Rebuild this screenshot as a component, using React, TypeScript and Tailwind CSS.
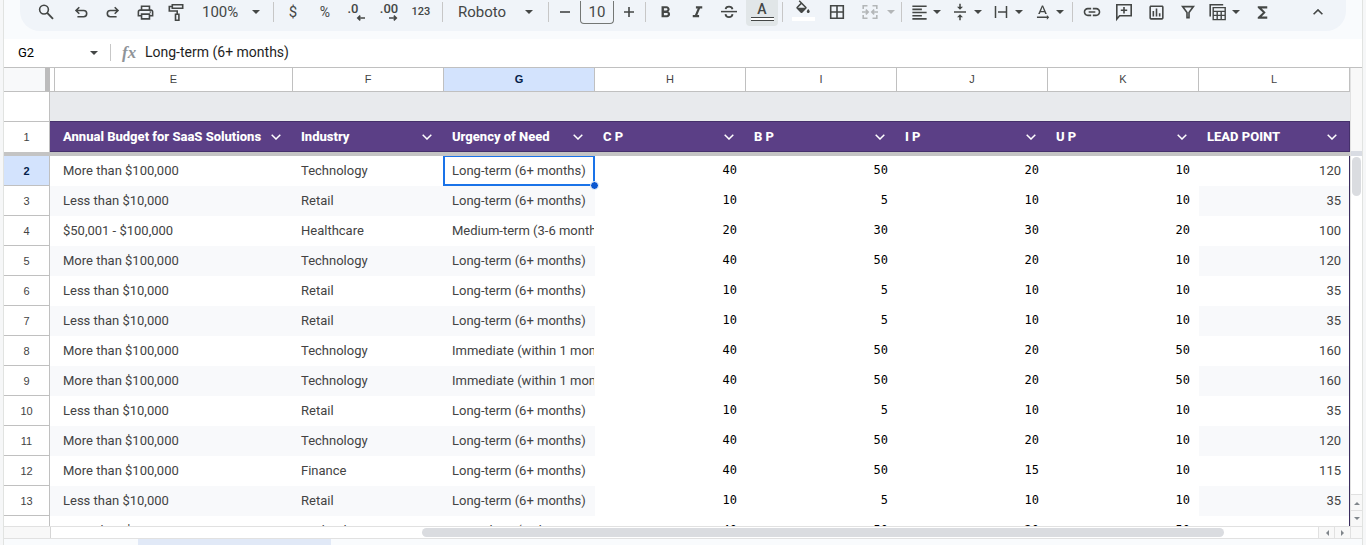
import React from 'react';
import {
  MdOutlinePrint,
  MdFormatBold,
  MdFormatItalic,
  MdFormatAlignLeft,
  MdVerticalAlignCenter,
  MdTextRotationNone,
  MdLink,
  MdOutlineInsertChart,
  MdFunctions,
} from 'react-icons/md';

type Kids = { children?: React.ReactNode };

const Glyph = ({ children }: Kids) => (
  <svg width="20" height="20" viewBox="0 0 20 20" fill="none" stroke="currentColor" strokeWidth="1.6" className="shrink-0" aria-hidden="true">
    {children}
  </svg>
);

const Caret = () => (
  <svg width="8" height="4" viewBox="0 0 8 4" fill="currentColor" className="shrink-0" aria-hidden="true">
    <path d="M0 0h8L4 4z" />
  </svg>
);

const Tool = ({ label, className = '', children }: Kids & { label: string; className?: string }) => (
  <button type="button" aria-label={label} className={`flex h-6 w-8 shrink-0 items-center justify-center ${className}`}>
    {children}
  </button>
);

const MenuTool = ({ label, className = '', children }: Kids & { label: string; className?: string }) => (
  <button type="button" aria-label={label} className={`flex h-6 shrink-0 items-center ${className}`}>
    <span className="flex w-5 justify-center">{children}</span>
    <Caret />
  </button>
);

const Sep = ({ className = '' }: { className?: string }) => <span className={`h-5 w-px shrink-0 bg-[#c7c7c7] ${className}`} />;

const Toolbar = () => (
  <div className="h-[39px] shrink-0 bg-[#f9fbfd] px-4">
    <div role="toolbar" aria-label="Formatting" className="flex h-[31px] items-center overflow-hidden rounded-b-[20px] bg-[#f0f4f9] pr-3 pb-[7px] pl-[10px] text-[#444746]">
      <Tool label="Search the menus">
        <Glyph>
          <circle cx="8" cy="7.6" r="4.4" />
          <path d="M11.2 10.9L17 16.8" strokeWidth="1.9" />
        </Glyph>
      </Tool>
      <Tool label="Undo" className="ml-[3px]">
        <Glyph>
          <path d="M8.3 5.2L5 8.5l3.3 3.3M5 8.5h7.6a3.1 3.1 0 0 1 0 6.2H6.4" />
        </Glyph>
      </Tool>
      <Tool label="Redo">
        <Glyph>
          <path d="M11.7 5.2L15 8.5l-3.3 3.3M15 8.5H7.4a3.1 3.1 0 0 0 0 6.2h6.2" />
        </Glyph>
      </Tool>
      <Tool label="Print">
        <MdOutlinePrint size={19} />
      </Tool>
      <Tool label="Paint format">
        <Glyph>
          <path d="M5.3 2.8h10.4v3.4H5.3zM5.3 4.5H2.3V9h7.9v3M8.5 12.2h3.4v6H8.5z" />
        </Glyph>
      </Tool>
      <button type="button" aria-label="Zoom" className="flex h-6 w-[72px] shrink-0 items-center justify-between pr-[5px] pl-[9px] text-[15px]">
        100%
        <Caret />
      </button>
      <Sep className="ml-2" />
      <Tool label="Format as currency" className="ml-[3px] text-[15px]">$</Tool>
      <Tool label="Format as percent" className="text-[14px]">%</Tool>
      <Tool label="Decrease decimal places" className="flex-col">
        <span className="mr-2 text-[13px] leading-3 font-medium">.0</span>
        <svg width="20" height="6" viewBox="0 0 20 6" fill="none" stroke="currentColor" strokeWidth="1.6" aria-hidden="true">
          <path d="M18 3h-7M13.3 .6L10.8 3l2.5 2.4" />
        </svg>
      </Tool>
      <Tool label="Increase decimal places" className="flex-col">
        <span className="text-[13px] leading-3 font-medium">.00</span>
        <svg width="20" height="6" viewBox="0 0 20 6" fill="none" stroke="currentColor" strokeWidth="1.6" aria-hidden="true">
          <path d="M10 3h7M14.8 .6L17.3 3l-2.5 2.4" />
        </svg>
      </Tool>
      <Tool label="More formats" className="text-[11px] font-medium">123</Tool>
      <Sep className="ml-[5px]" />
      <button type="button" aria-label="Font" className="ml-[7px] flex h-6 w-[90px] shrink-0 items-center justify-between pr-[7px] pl-2 text-[15px]">
        Roboto
        <Caret />
      </button>
      <Sep className="ml-2" />
      <Tool label="Decrease font size" className="ml-1 !w-6">
        <Glyph><path d="M5 10h10" /></Glyph>
      </Tool>
      <input aria-label="Font size" defaultValue="10" className="ml-[3px] h-[23px] w-[34px] shrink-0 rounded-b-[4px] border border-t-0 border-[#747775] bg-transparent text-center text-[15px]" />
      <Tool label="Increase font size" className="ml-[3px] !w-6">
        <Glyph><path d="M5 10h10M10 5v10" /></Glyph>
      </Tool>
      <Sep className="ml-1" />
      <Tool label="Bold" className="ml-[3px]"><MdFormatBold size={19} /></Tool>
      <Tool label="Italic"><MdFormatItalic size={19} /></Tool>
      <Tool label="Strikethrough">
        <Glyph>
          <path d="M2 9.6h16" strokeWidth="1.5" />
          <path d="M13.5 7.2C13.1 5.5 11.8 4.6 10 4.6S6.8 5.5 6.6 7.2M6.5 12.2c.2 1.9 1.6 3 3.5 3s3.3-1.1 3.5-3" strokeWidth="1.8" />
        </Glyph>
      </Tool>
      <button type="button" aria-label="Text color" className="ml-px flex h-[26px] w-8 shrink-0 flex-col items-center self-start rounded-b-[4px] bg-[#e1e6e8] pt-[2px]">
        <span className="text-[14px] leading-[15px] font-medium">A</span>
        <span className="h-1 w-[23px] border-y border-[#444746] bg-white" />
      </button>
      <Sep className="ml-1" />
      <button type="button" aria-label="Fill color" className="ml-1 flex h-[26px] w-8 shrink-0 flex-col items-center self-start">
        <svg width="18" height="17" viewBox="0 0 24 22" fill="currentColor" aria-hidden="true">
          <path d="M16.56 8.94L7.62 0 6.21 1.41l2.38 2.38-5.15 5.15c-.59.59-.59 1.54 0 2.12l5.5 5.5c.29.29.68.44 1.06.44s.77-.15 1.06-.44l5.5-5.5c.59-.58.59-1.53 0-2.12zM5.21 10L10 5.21 14.79 10zM19 11.5s-2 2.17-2 3.5c0 1.1.9 2 2 2s2-.9 2-2c0-1.33-2-3.5-2-3.5z" />
        </svg>
        <span className="h-1 w-[23px] bg-white" />
      </button>
      <Tool label="Borders" className="ml-[2px]">
        <Glyph><path d="M3.7 3.7h12.6v12.6H3.7zM10 3.7v12.6M3.7 10h12.6" /></Glyph>
      </Tool>
      <MenuTool label="Merge cells" className="ml-[7px] gap-[7px] text-[#b3b6b8]">
        <Glyph>
          <path d="M7.5 3.7H3.2V7M12.5 3.7h4.3V7M7.5 16.3H3.2V13M12.5 16.3h4.3V13M2 10h6M5.8 7.6L8.2 10l-2.4 2.4M18 10h-6M14.2 7.6L11.8 10l2.4 2.4" />
        </Glyph>
      </MenuTool>
      <Sep className="ml-[6px]" />
      <MenuTool label="Horizontal align" className="ml-[7px] gap-1"><MdFormatAlignLeft size={19} /></MenuTool>
      <MenuTool label="Vertical align" className="ml-[9px] gap-1"><MdVerticalAlignCenter size={18} /></MenuTool>
      <MenuTool label="Text wrapping" className="ml-[9px] gap-1">
        <Glyph><path d="M4.5 4v12M15.5 4v12M7 10h8" strokeWidth="1.5" /></Glyph>
      </MenuTool>
      <MenuTool label="Text rotation" className="ml-[9px] gap-1"><MdTextRotationNone size={19} /></MenuTool>
      <Sep className="ml-2" />
      <Tool label="Insert link" className="ml-[3px]"><MdLink size={20} /></Tool>
      <Tool label="Insert comment">
        <Glyph><path d="M2.8 17V2.8h14.4v10.9H5.6zM10 5v6.4M6.8 8.2h6.4" /></Glyph>
      </Tool>
      <Tool label="Insert chart"><MdOutlineInsertChart size={19} /></Tool>
      <Tool label="Create a filter">
        <Glyph><path d="M4.6 4.6h10.8L11 10.4v5.2H9v-5.2z" /></Glyph>
      </Tool>
      <MenuTool label="Table views" className="ml-1 gap-1">
        <Glyph>
          <path d="M2.2 14.5V2.8h13" />
          <path d="M5.2 5.6h12v12h-12zM5.2 9.4h12M5.2 13.4h12M9.2 9.4v8M13.2 9.4v8" strokeWidth="1.4" />
        </Glyph>
      </MenuTool>
      <Tool label="Functions" className="ml-[6px]"><MdFunctions size={19} /></Tool>
      <Tool label="Hide the menus" className="ml-auto">
        <Glyph><path d="M5.6 12.3L10 7.9l4.4 4.4" /></Glyph>
      </Tool>
    </div>
  </div>
);

const FormulaBar = () => (
  <div className="flex h-[29px] shrink-0 items-center border-b border-[#c0c0c0] bg-white pb-px text-black">
    <input aria-label="Name box" defaultValue="G2" className="w-[86px] pl-[14px] text-[13px]" />
    <button type="button" aria-label="Named ranges" className="text-[#444746]"><Caret /></button>
    <span className="ml-3 h-[17px] w-px bg-[#c7c7c7]" />
    <span className="ml-[11px] w-[23px] font-['Liberation_Serif',serif] text-[17px] leading-4 font-bold text-[#8f9499] italic">fx</span>
    <input aria-label="Formula" defaultValue="Long-term (6+ months)" className="flex-1 text-[14px] text-[#1f1f1f]" />
  </div>
);

const columns = ['E', 'F', 'G', 'H', 'I', 'J', 'K', 'L'];
const titles = ['Annual Budget for SaaS Solutions', 'Industry', 'Urgency of Need', 'C P', 'B P', 'I P', 'U P', 'LEAD POINT'];

const MORE = 'More than $100,000';
const LESS = 'Less than $10,000';
const LONG = 'Long-term (6+ months)';
const NOW = 'Immediate (within 1 month)';

const rows: [string, string, string, number, number, number, number, number][] = [
  [MORE, 'Technology', LONG, 40, 50, 20, 10, 120],
  [LESS, 'Retail', LONG, 10, 5, 10, 10, 35],
  ['$50,001 - $100,000', 'Healthcare', 'Medium-term (3-6 months)', 20, 30, 30, 20, 100],
  [MORE, 'Technology', LONG, 40, 50, 20, 10, 120],
  [LESS, 'Retail', LONG, 10, 5, 10, 10, 35],
  [LESS, 'Retail', LONG, 10, 5, 10, 10, 35],
  [MORE, 'Technology', NOW, 40, 50, 20, 50, 160],
  [MORE, 'Technology', NOW, 40, 50, 20, 50, 160],
  [LESS, 'Retail', LONG, 10, 5, 10, 10, 35],
  [MORE, 'Technology', LONG, 40, 50, 20, 10, 120],
  [MORE, 'Finance', LONG, 40, 50, 15, 10, 115],
  [LESS, 'Retail', LONG, 10, 5, 10, 10, 35],
  [MORE, 'Technology', NOW, 40, 50, 20, 50, 160],
];

const Sheet = () => (
  <table className="w-[1346px] table-fixed border-separate border-spacing-0 text-[#434343]">
    <colgroup>
      <col className="w-[46px]" />
      <col className="w-[5px]" />
      <col className="w-[238px]" />
      {columns.slice(1).map((c) => (
        <col key={c} className="w-[151px]" />
      ))}
    </colgroup>
    <thead className="text-left">
      <tr className="h-6 font-['Liberation_Sans',sans-serif] text-[11px] leading-4">
        <td className="border-r-[5px] border-b border-r-[#bcbcbc] border-b-[#c0c0c0] bg-[#f8f9fa] p-0" />
        <td className="border-r border-b border-[#c0c0c0] p-0" />
        {columns.map((c) => (
          <th
            key={c}
            scope="col"
            className={`border-r border-b border-[#c0c0c0] p-0 pb-[2px] text-center ${c === 'G' ? 'bg-[#d3e3fd] font-bold text-[#041e49]' : 'font-normal'}`}
          >
            {c}
          </th>
        ))}
      </tr>
      <tr className="h-[30px]">
        <td className="border-r border-b border-[#c0c0c0] p-0" />
        <td colSpan={9} className="border-b border-b-[#45306b] bg-[#e8eaed] p-0" />
      </tr>
      <tr className="h-[30px] bg-[#5b3f86] text-[13px] leading-4 text-white">
        <th scope="row" className="border-r border-[#c0c0c0] bg-white p-0 text-center font-['Liberation_Sans',sans-serif] text-[11px] font-normal text-[#434343]">1</th>
        <td className="border-b border-[#45306b] p-0" />
        {titles.map((t, i) => (
          <th key={t} scope="col" className={`border-b border-[#45306b] p-0 font-extrabold ${i === 7 ? 'border-r' : ''}`}>
            <div className="flex items-center justify-between pr-3 pl-2 whitespace-nowrap">
              {t}
              <button type="button" aria-label={`Filter ${t}`} className="-ml-2">
                <svg width="10" height="6" viewBox="0 0 10 6" fill="none" stroke="currentColor" strokeWidth="1.5" aria-hidden="true">
                  <path d="M.7 .7L5 5 9.3 .7" />
                </svg>
              </button>
            </div>
          </th>
        ))}
      </tr>
      <tr className="h-1">
        <td colSpan={10} className="bg-[#c4c4c4] p-0" />
      </tr>
    </thead>
    <tbody>
      {rows.map((r, n) => {
        const stripe = n % 2 === 1 ? 'bg-[#f8f9fb]' : '';
        return (
          <tr key={n} className="h-[30px] text-[13px] leading-4">
            <th
              scope="row"
              className={`border-r border-b border-[#c0c0c0] p-0 text-center font-['Liberation_Sans',sans-serif] text-[11px] ${n === 0 ? 'bg-[#d3e3fd] font-bold text-[#041e49]' : 'font-normal'}`}
            >
              {n + 2}
            </th>
            <td className={`p-0 ${stripe}`} />
            {r.map((v, i) => {
              if (i < 3) {
                return (
                  <td key={i} className={`relative p-0 ${stripe}`}>
                    <div className="mr-px overflow-hidden pl-2 whitespace-nowrap">{v}</div>
                    {n === 0 && i === 2 && (
                      <div className="absolute inset-y-0 right-0 -left-px z-10 border-2 border-t border-[#1a73e8]">
                        <span className="absolute -right-[6px] -bottom-[6px] size-[9px] rounded-full border border-white bg-[#0b57d0]" />
                      </div>
                    )}
                  </td>
                );
              }
              if (i < 7) {
                return (
                  <td key={i} className="p-0 pr-[9px] pb-[2px] text-right font-['DejaVu_Sans_Mono',monospace] text-[12px] text-black">
                    {v}
                  </td>
                );
              }
              return (
                <td key={i} className={`border-r border-[#3b2d5e] p-0 pr-2 text-right ${stripe}`}>{v}</td>
              );
            })}
          </tr>
        );
      })}
    </tbody>
  </table>
);

const Arrow = ({ d, label, className }: { d: string; label: string; className: string }) => (
  <button type="button" aria-label={label} className={`flex shrink-0 items-center justify-center border-[#e1e1e1] bg-[#f8f8f8] text-[#80868b] ${className}`}>
    <svg width="6" height="6" viewBox="0 0 6 6" fill="currentColor" aria-hidden="true"><path d={d} /></svg>
  </button>
);

export default function App() {
  return (
    <div className="flex h-screen flex-col overflow-hidden border-x-[3px] border-[#f6f7f8] font-[Roboto,sans-serif]">
      <div className="flex min-h-0 flex-1 flex-col border-x border-[#e1e3e1]">
        <Toolbar />
        <FormulaBar />
        <div className="flex min-h-0 flex-1">
          <div className="min-w-0 flex-1 overflow-hidden bg-white">
            <Sheet />
          </div>
          <div className="flex w-3 shrink-0 flex-col border-l border-[#e1e1e1] bg-white">
            <div className="h-[83px] shrink-0 bg-[#f8f8f8]" />
            <div className="h-[5px] shrink-0 bg-[#d9dce3]" />
            <div className="mx-px mt-px h-[39px] shrink-0 rounded-full bg-[#dadce0]" />
            <Arrow d="M0 5h6L3 2z" label="Scroll up" className="mt-auto h-4 border-t" />
            <Arrow d="M0 1h6L3 4z" label="Scroll down" className="h-4 border-t" />
          </div>
        </div>
        <div className="flex h-[13px] shrink-0 border-y border-[#e1e1e1] bg-white">
          <div className="w-[47px] shrink-0 border-r border-[#d5d5d5] bg-[#f8f8f8]" />
          <div className="flex flex-1 items-center">
            <div className="ml-[29.3%] h-[9px] w-[63.3%] rounded-full bg-[#dadce0]" />
          </div>
          <Arrow d="M5 0v6L2 3z" label="Scroll left" className="w-4 border-l" />
          <Arrow d="M1 0v6l3-3z" label="Scroll right" className="w-4 border-l" />
          <div className="w-3 border-l border-[#e1e1e1] bg-[#f8f8f8]" />
        </div>
        <div className="flex h-[6px] shrink-0 bg-[#f9fbfd] pl-[134px]">
          <div className="w-[193px] bg-[#e1e9f7]" />
        </div>
      </div>
    </div>
  );
}
